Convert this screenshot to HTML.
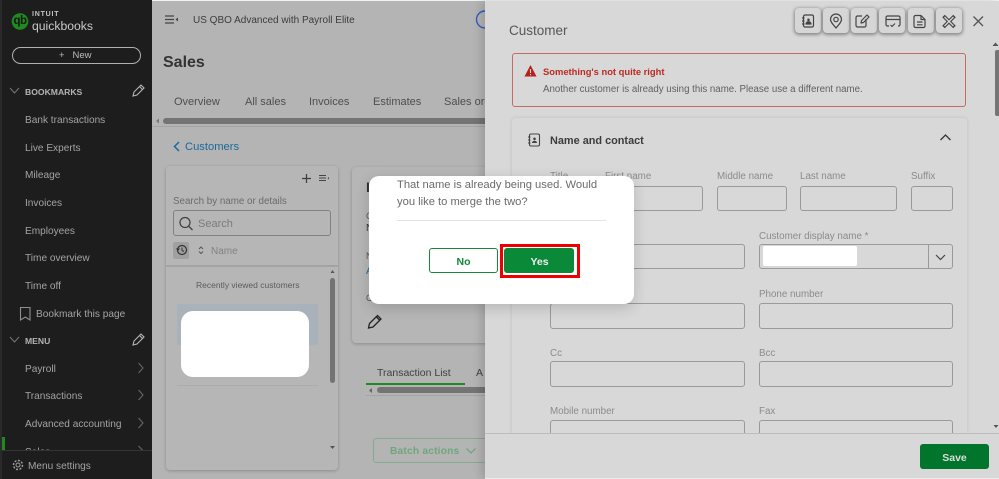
<!DOCTYPE html>
<html><head><meta charset="utf-8">
<style>
html,body{margin:0;padding:0}
body{width:999px;height:479px;overflow:hidden;position:relative;background:#b4b4b4;font-family:"Liberation Sans",sans-serif}
#r{position:absolute;left:0;top:0;width:999px;height:479px;overflow:hidden;filter:blur(.3px)}
.a{position:absolute;box-sizing:border-box}
.t{position:absolute;white-space:nowrap;line-height:14px;height:14px}
.s{font-size:10.100px;color:#a4a4a4;left:25px}
.sh{font-size:8.600px;font-weight:bold;color:#b4b4b4;left:25px}
.f{font-size:9.800px;color:#8b8b8b}
.i{position:absolute;box-sizing:border-box;border:1px solid #9a9a9a;border-radius:3px}
.tab{font-size:11px;color:#4e4e4e;top:95px}
.b{position:absolute;top:8px;width:26px;height:25px;background:#d6d6d6;border-radius:4px;box-shadow:0 1px 3px 1px #8a8a8a}
svg{position:absolute;overflow:visible}
</style></head><body><div id="r">

<!-- top strip -->
<div class="a" style="left:0;top:0;width:999px;height:1px;background:#f2f2f2"></div>

<!-- sidebar -->
<div class="a" style="left:0;top:0;width:152px;height:479px;background:#1d1d1d"></div>
<div class="a" style="left:0;top:0;width:2px;height:479px;background:#2a2a2a"></div>
<svg style="left:0;top:0" width="152" height="479">
<circle cx="20" cy="21.500" r="8.300" fill="#1f8a1f"/>
<path d="M10 88l4.500 5 4.500-5" fill="none" stroke="#777" stroke-width="1"/>
<path d="M10 337l4.500 5 4.500-5" fill="none" stroke="#777" stroke-width="1"/>
<g fill="none" stroke="#b5b5b5" stroke-width="1.100">
<path d="M133 96l1-4 7-7 3 3-7 7zM139.500 86.500l3 3"/>
<path d="M133 345l1-4 7-7 3 3-7 7zM139.500 335.500l3 3"/>
</g>
<path d="M20.500 307.500h9.500v12.500l-4.750-3-4.750 3z" fill="none" stroke="#8f8f8f" stroke-width="1.100"/>
<g fill="none" stroke="#666" stroke-width="1.100">
<path d="M138.500 363l4.500 5-4.500 5M138.500 390l4.500 5-4.500 5M138.500 418l4.500 5-4.500 5M138.500 446l4 4"/>
</g>
</svg>
<div class="t" style="left:12px;top:14px;width:16px;text-align:center;font-size:11.500px;font-weight:bold;letter-spacing:-.5px;color:#141414">qb</div>
<div class="t" style="left:32px;top:8px;font-size:7px;letter-spacing:.8px;color:#c4c4c4;font-weight:bold">INTUIT</div>
<div class="t" style="left:32px;top:19px;font-size:12.200px;color:#c8c8c8">quickbooks</div>
<div class="a" style="left:12px;top:47px;width:129px;height:17px;border:1px solid #b0b0b0;border-radius:9px"></div>
<div class="t" style="left:59px;top:49px;font-size:9.500px;color:#bcbcbc">+&nbsp;&nbsp;&nbsp;New</div>
<div class="t sh" style="top:85px">BOOKMARKS</div>
<div class="t s" style="top:114px">Bank transactions</div>
<div class="t s" style="top:142px">Live Experts</div>
<div class="t s" style="top:169px">Mileage</div>
<div class="t s" style="top:197px">Invoices</div>
<div class="t s" style="top:225px">Employees</div>
<div class="t s" style="top:252px">Time overview</div>
<div class="t s" style="top:280px">Time off</div>
<div class="t s" style="top:308px;left:36px">Bookmark this page</div>
<div class="t sh" style="top:334px">MENU</div>
<div class="t s" style="top:363px">Payroll</div>
<div class="t s" style="top:390px">Transactions</div>
<div class="t s" style="top:418px">Advanced accounting</div>
<div class="t s" style="top:446px;height:4px;overflow:hidden">Sales</div>
<div class="a" style="left:2px;top:437px;width:3px;height:13px;background:#1f8a1f"></div>
<div class="a" style="left:2px;top:450px;width:150px;height:1px;background:#343434"></div>
<div class="a" style="left:2px;top:451px;width:150px;height:28px;background:#1d1d1d"></div>
<svg style="left:0;top:0" width="40" height="479"><circle cx="18" cy="465" r="2" fill="none" stroke="#a0a0a0"/><circle cx="18" cy="465" r="4.500" fill="none" stroke="#a0a0a0" stroke-width="1.400" stroke-dasharray="2 1.500"/></svg>
<div class="t s" style="top:460px;left:28px">Menu settings</div>

<!-- main header -->
<svg style="left:0;top:0" width="490" height="170">
<path d="M165 16h9M165 19.500h9M165 23h9" stroke="#444" stroke-width="1.300" fill="none"/>
<path d="M178 17.500v4l-2.500-2z" fill="#444"/>
<path d="M485 11a8.500 8.500 0 0 0 0 17" fill="none" stroke="#2d5fc0" stroke-width="1.400"/>
<path d="M179 142l-4.500 4.500 4.500 4.500" fill="none" stroke="#1c6a9c" stroke-width="1.500"/>
<path d="M159 118.500v5l-3-2.500z" fill="#777"/>
</svg>
<div class="t" style="left:193px;top:14px;font-size:10px;color:#3c3c3c">US QBO Advanced with Payroll Elite</div>
<div class="t" style="left:163px;top:54px;height:18px;line-height:18px;font-size:16px;font-weight:bold;color:#333">Sales</div>
<div class="t tab" style="left:174px">Overview</div>
<div class="t tab" style="left:245px">All sales</div>
<div class="t tab" style="left:309px">Invoices</div>
<div class="t tab" style="left:373px">Estimates</div>
<div class="t tab" style="left:444px">Sales orders</div>
<div class="a" style="left:163px;top:118px;width:330px;height:6px;border-radius:3px;background:#747474"></div>
<div class="a" style="left:152px;top:126px;width:340px;height:1px;background:#a4a4a4"></div>
<div class="t" style="left:185px;top:140px;font-size:11.200px;color:#1c6a9c">Customers</div>

<!-- left card -->
<div class="a" style="left:166px;top:166px;width:172px;height:304px;background:#b6b6b6;border-radius:4px;box-shadow:0 1px 3px #8c8c8c"></div>
<svg style="left:0;top:0" width="345" height="479">
<path d="M306.500 174v9M302 178.500h9" stroke="#3d3d3d" stroke-width="1.200"/>
<path d="M319 175.500h7M319 178h7M319 180.500h7" stroke="#444" stroke-width="1"/>
<path d="M329 177v2.500l-1.500-1.200z" fill="#444"/>
<circle cx="185" cy="222.500" r="5" fill="none" stroke="#444" stroke-width="1.300"/>
<path d="M188.500 226l4 4" stroke="#444" stroke-width="1.300"/>
<rect x="173" y="242" width="16" height="17" rx="2" fill="#a0a0a0"/>
<circle cx="182" cy="250" r="4.500" fill="none" stroke="#333" stroke-width="1.200"/>
<path d="M182 247.500v3l2 1M176.500 248.500l1.500 1.500 1.500-1.500" fill="none" stroke="#333" stroke-width="1"/>
<path d="M199 249l2-2 2 2M199 251.500l2 2 2-2" fill="none" stroke="#555" stroke-width="1"/>
<path d="M330.500 273l2-3 2 3zM330 446h5l-2.500 3z" fill="#555"/>
</svg>
<div class="t" style="left:173px;top:195px;font-size:9.800px;color:#6b6b6b">Search by name or details</div>
<div class="a" style="left:173px;top:210px;width:158px;height:26px;border:1px solid #818181;border-radius:3px"></div>
<div class="t" style="left:198px;top:217px;font-size:11px;color:#7a7a7a">Search</div>
<div class="t" style="left:211px;top:245px;font-size:10px;color:#828282">Name</div>
<div class="a" style="left:166px;top:265px;width:172px;height:2px;background:#a3a3a3"></div>
<div class="t" style="left:196px;top:278px;font-size:8.500px;color:#5c5c5c">Recently viewed customers</div>
<div class="a" style="left:177px;top:304px;width:141px;height:41px;background:#a9b1bb"></div>
<div class="a" style="left:181px;top:311px;width:128px;height:66px;background:#fff;border-radius:12px"></div>
<div class="a" style="left:177px;top:385px;width:141px;height:1px;background:#acacac"></div>
<div class="a" style="left:330px;top:278px;width:5px;height:105px;border-radius:3px;background:#737373"></div>

<!-- second card -->
<div class="a" style="left:352px;top:167px;width:140px;height:176px;background:#b6b6b6;border-radius:4px;box-shadow:0 1px 3px #8c8c8c"></div>
<div class="t" style="left:366px;top:180px;font-size:14px;font-weight:bold;color:#333">I</div>
<div class="t" style="left:366px;top:209px;font-size:9px;color:#555">C</div>
<div class="t" style="left:366px;top:222px;font-size:10px;color:#333">N</div>
<div class="t" style="left:366px;top:249px;font-size:9px;color:#555">N</div>
<div class="t" style="left:366px;top:265px;font-size:10px;color:#1c6a9c">A</div>
<div class="t" style="left:366px;top:291px;font-size:9px;color:#555">C</div>
<svg style="left:0;top:0" width="490" height="479">
<path d="M368.500 328l1-4.500 8-8 3.500 3.500-8 8z M376 316.500l3.500 3.500" fill="none" stroke="#222" stroke-width="1.300"/>
<path d="M372 388v5l-3-2.500z" fill="#666"/>
</svg>
<div class="t" style="left:377px;top:366px;font-size:10.500px;color:#3f3f3f">Transaction List</div>
<div class="t" style="left:476px;top:366px;font-size:10.500px;color:#3f3f3f">A</div>
<div class="a" style="left:366px;top:383px;width:99px;height:2px;background:#1f8a1f"></div>
<div class="a" style="left:377px;top:387px;width:115px;height:6px;border-radius:3px;background:#747474"></div>
<div class="a" style="left:366px;top:395px;width:126px;height:1px;background:#a4a4a4"></div>
<div class="a" style="left:373px;top:438px;width:120px;height:25px;border:1px solid #85ab8f;border-radius:3px"></div>
<div class="t" style="left:390px;top:445px;font-size:10.200px;font-weight:bold;color:#6ea67e;letter-spacing:.2px">Batch actions</div>
<svg style="left:0;top:0" width="490" height="479"><path d="M466.500 448.500l4.500 4.500 4.500-4.500" fill="none" stroke="#6ea67e" stroke-width="1.300"/></svg>

<!-- customer panel -->
<div class="a" style="left:485px;top:1px;width:514px;height:478px;background:#d8d8d8;box-shadow:-4px 0 8px rgba(0,0,0,.14)"></div>
<div class="t" style="left:509px;top:23px;height:16px;line-height:16px;font-size:13.500px;color:#565656">Customer</div>

<div class="b" style="left:795px"></div><div class="b" style="left:823px"></div><div class="b" style="left:851px"></div><div class="b" style="left:879px"></div><div class="b" style="left:908px"></div><div class="b" style="left:936px"></div>
<svg style="left:0;top:0" width="999" height="60">
<g fill="none" stroke="#444" stroke-width="1.200" stroke-linejoin="round">
<rect x="803.500" y="15" width="10" height="12" rx="1.500"/>
<path d="M802 18h2.500M802 21h2.500M802 24h2.500"/>
<path d="M806 24c0-3 5-3 5 0z" fill="#444"/><circle cx="808.500" cy="19.800" r="1.300" fill="#444" stroke="none"/>
<path d="M836 28c-3-3.500-5.500-6-5.500-8.500a5.500 5.500 0 0 1 11 0c0 2.500-2.500 5-5.500 8.500z"/><circle cx="836" cy="19.500" r="2.200"/>
<path d="M866 19v6.500a1.500 1.500 0 0 1-1.500 1.500h-7a1.500 1.500 0 0 1-1.500-1.500v-8a1.500 1.500 0 0 1 1.500-1.500H862"/>
<path d="M861 23l.6-2.500 5.400-5.500 2 2-5.500 5.500z"/>
<path d="M889 26h-1.500a1.500 1.500 0 0 1-1.500-1.500v-7a1.500 1.500 0 0 1 1.500-1.500h11a1.500 1.500 0 0 1 1.500 1.500v7a1.500 1.500 0 0 1-1.500 1.500H898M886 19.500h14M890.500 25l1.500 1.500 3-3"/>
<path d="M915.500 15.500h5.500l4 4v6.500a1.500 1.500 0 0 1-1.500 1.500h-8a1.500 1.500 0 0 1-1.500-1.500v-9a1.500 1.500 0 0 1 1.500-1.500zM921 15.500v4h4M917 22h5.500M917 24.800h5.500"/>
<path d="M943.500 16l11 11M954.500 16l-11 11" stroke-width="3.600" stroke="#444"/>
<path d="M944.500 17l9 9M953.500 17l-9 9" stroke-width="1.300" stroke="#d6d6d6"/>
</g>
<path d="M973.500 16.500l9.500 9.500M983 16.500l-9.500 9.500" stroke="#555" stroke-width="1.300"/>
<path d="M992.500 46l3-3.500 3 3.500z" fill="#555"/>
</svg>
<div class="a" style="left:995px;top:50px;width:4px;height:66px;background:#757575;border-radius:2px 0 0 2px"></div>

<!-- alert -->
<div class="a" style="left:512px;top:53px;width:454px;height:54px;border:1px solid #c86a62;border-radius:3px"></div>
<svg style="left:0;top:0" width="540" height="90"><path d="M530.500 65l6 11.500h-12z" fill="#b8211b"/><path d="M530.500 69v4M530.500 74v1.200" stroke="#d8d8d8" stroke-width="1.100"/></svg>
<div class="t" style="left:543px;top:65px;font-size:9.400px;font-weight:bold;color:#bb2a22">Something's not quite right</div>
<div class="t" style="left:543px;top:83px;font-size:9.700px;color:#606060">Another customer is already using this name. Please use a different name.</div>

<!-- name & contact card -->
<div class="a" style="left:512px;top:118px;width:455px;height:316px;background:#d8d8d8;border-radius:3px 3px 0 0;box-shadow:0 0 3px #bdbdbd"></div>
<svg style="left:0;top:0" width="960" height="150">
<rect x="529.500" y="134" width="10" height="12" rx="1.500" fill="none" stroke="#444" stroke-width="1.100"/>
<path d="M528 137h2.500M528 140h2.500M528 143h2.500" stroke="#444"/>
<path d="M532 143c0-3 5-3 5 0z" fill="#444"/><circle cx="534.500" cy="138.800" r="1.300" fill="#444"/>
<path d="M940.500 140l5-5 5 5" fill="none" stroke="#333" stroke-width="1.300"/>
</svg>
<div class="t" style="left:550px;top:134px;font-size:10.900px;font-weight:bold;color:#3c3c3c">Name and contact</div>

<div class="t f" style="left:550px;top:170px">Title</div>
<div class="t f" style="left:605px;top:170px">First name</div>
<div class="t f" style="left:717px;top:170px">Middle name</div>
<div class="t f" style="left:800px;top:170px">Last name</div>
<div class="t f" style="left:911px;top:170px">Suffix</div>
<div class="i" style="left:550px;top:186px;width:42px;height:25px"></div>
<div class="i" style="left:605px;top:186px;width:98px;height:25px"></div>
<div class="i" style="left:717px;top:186px;width:70px;height:25px"></div>
<div class="i" style="left:800px;top:186px;width:97px;height:25px"></div>
<div class="i" style="left:911px;top:186px;width:42px;height:25px"></div>

<div class="t f" style="left:759px;top:230px">Customer display name *</div>
<div class="i" style="left:550px;top:244px;width:195px;height:25px"></div>
<div class="i" style="left:759px;top:244px;width:194px;height:25px"></div>
<div class="a" style="left:928px;top:244px;width:1px;height:25px;background:#9a9a9a"></div>
<div class="a" style="left:763px;top:246px;width:94px;height:20px;background:#fff;border-radius:2px"></div>
<svg style="left:0;top:0" width="960" height="270"><path d="M936 255l4.500 4.500 4.500-4.500" fill="none" stroke="#444" stroke-width="1.200"/></svg>

<div class="t f" style="left:759px;top:288px">Phone number</div>
<div class="i" style="left:550px;top:303px;width:195px;height:26px"></div>
<div class="i" style="left:759px;top:303px;width:194px;height:26px"></div>

<div class="t f" style="left:550px;top:347px">Cc</div>
<div class="t f" style="left:759px;top:347px">Bcc</div>
<div class="i" style="left:550px;top:361px;width:195px;height:26px"></div>
<div class="i" style="left:759px;top:361px;width:194px;height:26px"></div>

<div class="t f" style="left:550px;top:405px">Mobile number</div>
<div class="t f" style="left:759px;top:405px">Fax</div>
<div class="i" style="left:550px;top:420px;width:195px;height:26px"></div>
<div class="i" style="left:759px;top:420px;width:194px;height:26px"></div>

<!-- footer -->
<div class="a" style="left:485px;top:433px;width:514px;height:46px;background:#d8d8d8;border-top:1px solid #bdbdbd"></div>
<div class="a" style="left:485px;top:478px;width:514px;height:1px;background:#ececec"></div>
<svg style="left:0;top:0" width="999" height="440"><path d="M993.500 425h5l-2.500 3z" fill="#555"/></svg>
<div class="a" style="left:920px;top:444px;width:69px;height:25px;background:#00752b;border-radius:3px"></div>
<div class="t" style="left:920px;top:451px;width:69px;text-align:center;font-size:10.500px;font-weight:bold;color:#dcdcdc">Save</div>

<!-- modal -->
<div class="a" style="left:369px;top:176px;width:265px;height:128px;background:#fff;border-radius:10px;box-shadow:0 4px 14px rgba(0,0,0,.16)"></div>
<div class="t" style="left:397px;top:178px;font-size:11.200px;color:#6a6a6a">That name is already being used. Would</div>
<div class="t" style="left:397px;top:195px;font-size:11.200px;color:#6a6a6a">you like to merge the two?</div>
<div class="a" style="left:397px;top:220px;width:209px;height:1px;background:#e4e4e4"></div>
<div class="a" style="left:429px;top:248px;width:69px;height:25px;border:1px solid #108a38;border-radius:3px;background:#fff"></div>
<div class="t" style="left:429px;top:255px;width:69px;text-align:center;font-size:10.500px;font-weight:bold;color:#108a38">No</div>
<div class="a" style="left:500px;top:244px;width:80px;height:34px;border:3px solid #ee0000"></div>
<div class="a" style="left:504px;top:248px;width:70px;height:25px;background:#0a8a38;border-radius:3px"></div>
<div class="t" style="left:505px;top:255px;width:69px;text-align:center;font-size:10.500px;font-weight:bold;color:#f0f0f0">Yes</div>

</div></body></html>
